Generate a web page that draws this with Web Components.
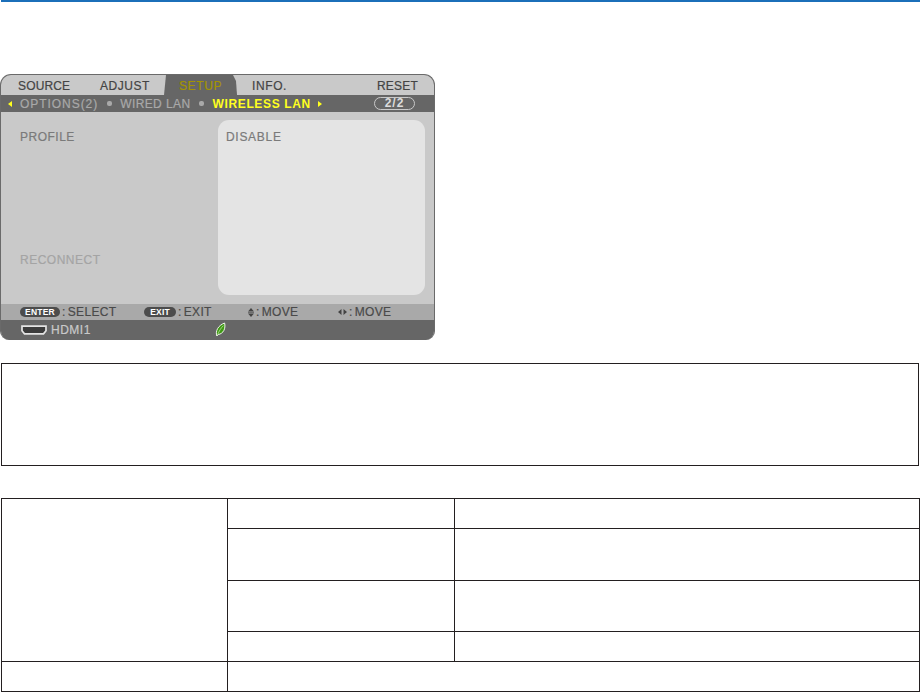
<!DOCTYPE html>
<html lang="en">
<head>
<meta charset="utf-8">
<title>Wireless LAN setup</title>
<style>
    html, body { margin: 0; padding: 0; background: #fff; }
    body { font-family: "Liberation Sans", Arial, sans-serif; height: 692px; overflow: hidden; }
</style>
</head>
<body>
<manual-page>
    <osd-menu>
        <osd-tab slot="tabs" style="--w:82px;--ls:.15px">SOURCE</osd-tab>
        <osd-tab slot="tabs" style="--w:79px;--ls:.55px">ADJUST</osd-tab>
        <osd-tab slot="tabs" style="--w:73px;--ls:.6px" active>SETUP</osd-tab>
        <osd-tab slot="tabs" style="--w:125px;--ls:.6px">INFO.</osd-tab>
        <osd-tab slot="tabs" style="--w:58px;--ls:.2px">RESET</osd-tab>
    </osd-menu>
    <note-box></note-box>
    <spec-table></spec-table>
</manual-page>

<script>
// Pestaña del menú superior
class OsdTab extends HTMLElement {
    constructor() {
        super();
        this.shadow = this.attachShadow({mode: 'open'});
    }

    connectedCallback() {
        this.shadow.innerHTML = `
        <style>
            :host {
                display: flex;
                align-items: center;
                box-sizing: border-box;
                width: var(--w);
                padding-left: 15px;
                padding-top: 1px;
                letter-spacing: var(--ls);
                color: #444;
            }
            :host([active]) {
                color: #a39400;
                background: #666;
                clip-path: polygon(2px 0, calc(100% - 4px) 0, calc(100% - 1px) 6px, 100% 100%, 0 100%);
            }
        </style>
        <slot></slot>
        `;
    }
}

// Menú en pantalla del proyector
class OsdMenu extends HTMLElement {
    constructor() {
        super();
        this.shadow = this.attachShadow({mode: 'open'});
    }

    connectedCallback() {
        this.shadow.innerHTML = `
        <style>
            :host {
                display: flex;
                flex-direction: column;
                box-sizing: border-box;
                width: 435px;
                height: 266px;
                margin-top: 72px;
                border: 1px solid #6a6a6a;
                border-width: 1px 1px 0 1px;
                border-radius: 11px 11px 9px 9px;
                overflow: hidden;
                background: #c9c9c9;
                font-size: 12px;
                -webkit-text-stroke: .2px;
            }
            .tabs {
                display: flex;
                height: 20px;
                padding-left: 2px;
            }
            .sub {
                display: flex;
                align-items: center;
                height: 17px;
                background: #666;
                color: #a9a9a9;
                padding-left: 7px;
                letter-spacing: .4px;
            }
            .sub .first { letter-spacing: .95px; }
            .sub .on { color: #ffff1e; font-weight: bold; letter-spacing: .65px; -webkit-text-stroke: 0; }
            .arrow { margin-right: 8px; display: block; }
            .dot { width: 5px; height: 5px; border-radius: 2px; background: #a9a9a9; margin: 0 8px 0 9px; }
            .arrow.next { margin: 0 0 0 7px; }
            .pill {
                margin-left: auto;
                margin-right: 19px;
                width: 41px;
                height: 13px;
                box-sizing: border-box;
                border: 1px solid #c9c9c9;
                border-radius: 7px;
                color: #dcdcdc;
                font-weight: bold;
                line-height: 11px;
                text-align: center;
                letter-spacing: 1px;
                -webkit-text-stroke: 0;
            }
            .body {
                flex: 1;
                display: flex;
                justify-content: space-between;
                padding: 8px 9px 9px 19px;
            }
            .labels {
                display: flex;
                flex-direction: column;
                gap: 108px;
                padding-top: 10px;
                color: #7a7a7a;
                letter-spacing: .5px;
                line-height: 15px;
            }
            .labels .off { color: #a4a4a4; }
            .panel {
                width: 207px;
                box-sizing: border-box;
                background: #e4e4e4;
                border-radius: 11px;
                padding: 10px 8px;
                color: #7a7a7a;
                letter-spacing: .7px;
                line-height: 15px;
            }
            .hints {
                display: grid;
                grid-template-columns: 124px 104px 90px 1fr;
                align-items: center;
                height: 16px;
                padding-left: 19px;
                background: #a9a9a9;
                color: #4a4a4a;
                letter-spacing: .35px;
            }
            .hint { display: flex; align-items: center; }
            .hint .colon { margin: 0 2px 0 2px; }
            .key {
                display: inline-block;
                box-sizing: border-box;
                height: 10px;
                line-height: 10px;
                border-radius: 5px;
                background: #4c4c4c;
                color: #fff;
                font-size: 8.5px;
                font-weight: bold;
                text-align: center;
                letter-spacing: .2px;
                -webkit-text-stroke: 0;
            }
            .status {
                display: flex;
                align-items: center;
                height: 20px;
                padding-left: 20px;
                background: #666;
                color: #c9c9c9;
                letter-spacing: .5px;
            }
            .status svg { display: block; }
            .status .leaf { margin-left: 124px; margin-top: -1px; }
        </style>
        <div class="tabs"><slot name="tabs"></slot></div>
        <div class="sub">
            <svg class="arrow" width="4" height="6" viewBox="0 0 4 6"><path d="M4 0V6L0 3Z" fill="#ffff1e"/></svg>
            <span class="first">OPTIONS(2)</span>
            <span class="dot"></span>
            <span>WIRED LAN</span>
            <span class="dot"></span>
            <span class="on">WIRELESS LAN</span>
            <svg class="arrow next" width="4" height="6" viewBox="0 0 4 6"><path d="M0 0V6L4 3Z" fill="#ffff1e"/></svg>
            <span class="pill">2/2</span>
        </div>
        <div class="body">
            <div class="labels">
                <span>PROFILE</span>
                <span class="off">RECONNECT</span>
            </div>
            <div class="panel">DISABLE</div>
        </div>
        <div class="hints">
            <span class="hint"><span class="key" style="width:40px">ENTER</span><span class="colon">:</span><span>SELECT</span></span>
            <span class="hint"><span class="key" style="width:32px">EXIT</span><span class="colon">:</span><span>EXIT</span></span>
            <span class="hint">
                <svg width="6" height="9" viewBox="0 0 6 9"><path d="M3 0L6 3.5H0ZM0 5.5H6L3 9Z" fill="#444"/><path d="M0 4.5H6" stroke="#444" stroke-width=".6"/></svg>
                <span class="colon">:</span><span>MOVE</span>
            </span>
            <span class="hint">
                <svg width="9" height="6" viewBox="0 0 9 6"><path d="M0 3L3.5 0V6ZM5.5 0L9 3L5.5 6Z" fill="#444"/></svg>
                <span class="colon">:</span><span>MOVE</span>
            </span>
        </div>
        <div class="status">
            <svg width="26" height="10" viewBox="0 0 26 10"><path d="M1 1.2H25V5.8L22.5 8.8H3.5L1 5.8Z" fill="#3c3c3c" stroke="#e4e4e4" stroke-width="1.7"/></svg>
            <span style="margin-left:4px">HDMI1</span>
            <svg class="leaf" width="11" height="15" viewBox="0 0 11 15"><path d="M1.8 14C.2 9 3 3.5 9.6 1C10.8 6.5 8.6 11.5 3.2 12.6Z" fill="#3f9a14" stroke="#eef3ea" stroke-width="1"/><path d="M2.6 12.8C4 9 6 6 8.4 3.6" fill="none" stroke="#cfe8b8" stroke-width=".7"/></svg>
        </div>
        `;
    }
}

// Recuadro vacío de la nota
class NoteBox extends HTMLElement {
    constructor() {
        super();
        this.shadow = this.attachShadow({mode: 'open'});
    }

    connectedCallback() {
        this.shadow.innerHTML = `
        <style>
            :host {
                display: block;
                box-sizing: border-box;
                width: 918px;
                height: 103px;
                margin: 23px 0 0 1px;
                border: 1px solid #231f20;
            }
        </style>
        `;
    }
}

// Tabla de ajustes, las celdas no llevan texto
class SpecTable extends HTMLElement {
    constructor() {
        super();
        this.shadow = this.attachShadow({mode: 'open'});
    }

    connectedCallback() {
        this.shadow.innerHTML = `
        <style>
            :host {
                display: grid;
                grid-template-columns: 226px 227px 465px;
                grid-template-rows: 30px 52px 51px 30px 30px;
                box-sizing: border-box;
                width: 919px;
                margin: 32px 0 0 1px;
                border-top: 1px solid #231f20;
                border-left: 1px solid #231f20;
            }
            div {
                box-sizing: border-box;
                border-right: 1px solid #231f20;
                border-bottom: 1px solid #231f20;
            }
            .tall { grid-row: span 4; }
            .wide { grid-column: span 2; }
        </style>
        <div class="tall"></div>
        <div></div><div></div>
        <div></div><div></div>
        <div></div><div></div>
        <div></div><div></div>
        <div></div><div class="wide"></div>
        `;
    }
}

// Página completa con la línea azul arriba
class ManualPage extends HTMLElement {
    constructor() {
        super();
        this.shadow = this.attachShadow({mode: 'open'});
    }

    connectedCallback() {
        this.shadow.innerHTML = `
        <style>
            :host { display: block; }
            .rule { height: 2px; margin-left: 1px; background: #1b6fb9; }
        </style>
        <div class="rule"></div>
        <slot></slot>
        `;
    }
}

customElements.define('osd-tab', OsdTab);
customElements.define('osd-menu', OsdMenu);
customElements.define('note-box', NoteBox);
customElements.define('spec-table', SpecTable);
customElements.define('manual-page', ManualPage);
</script>
</body>
</html>
